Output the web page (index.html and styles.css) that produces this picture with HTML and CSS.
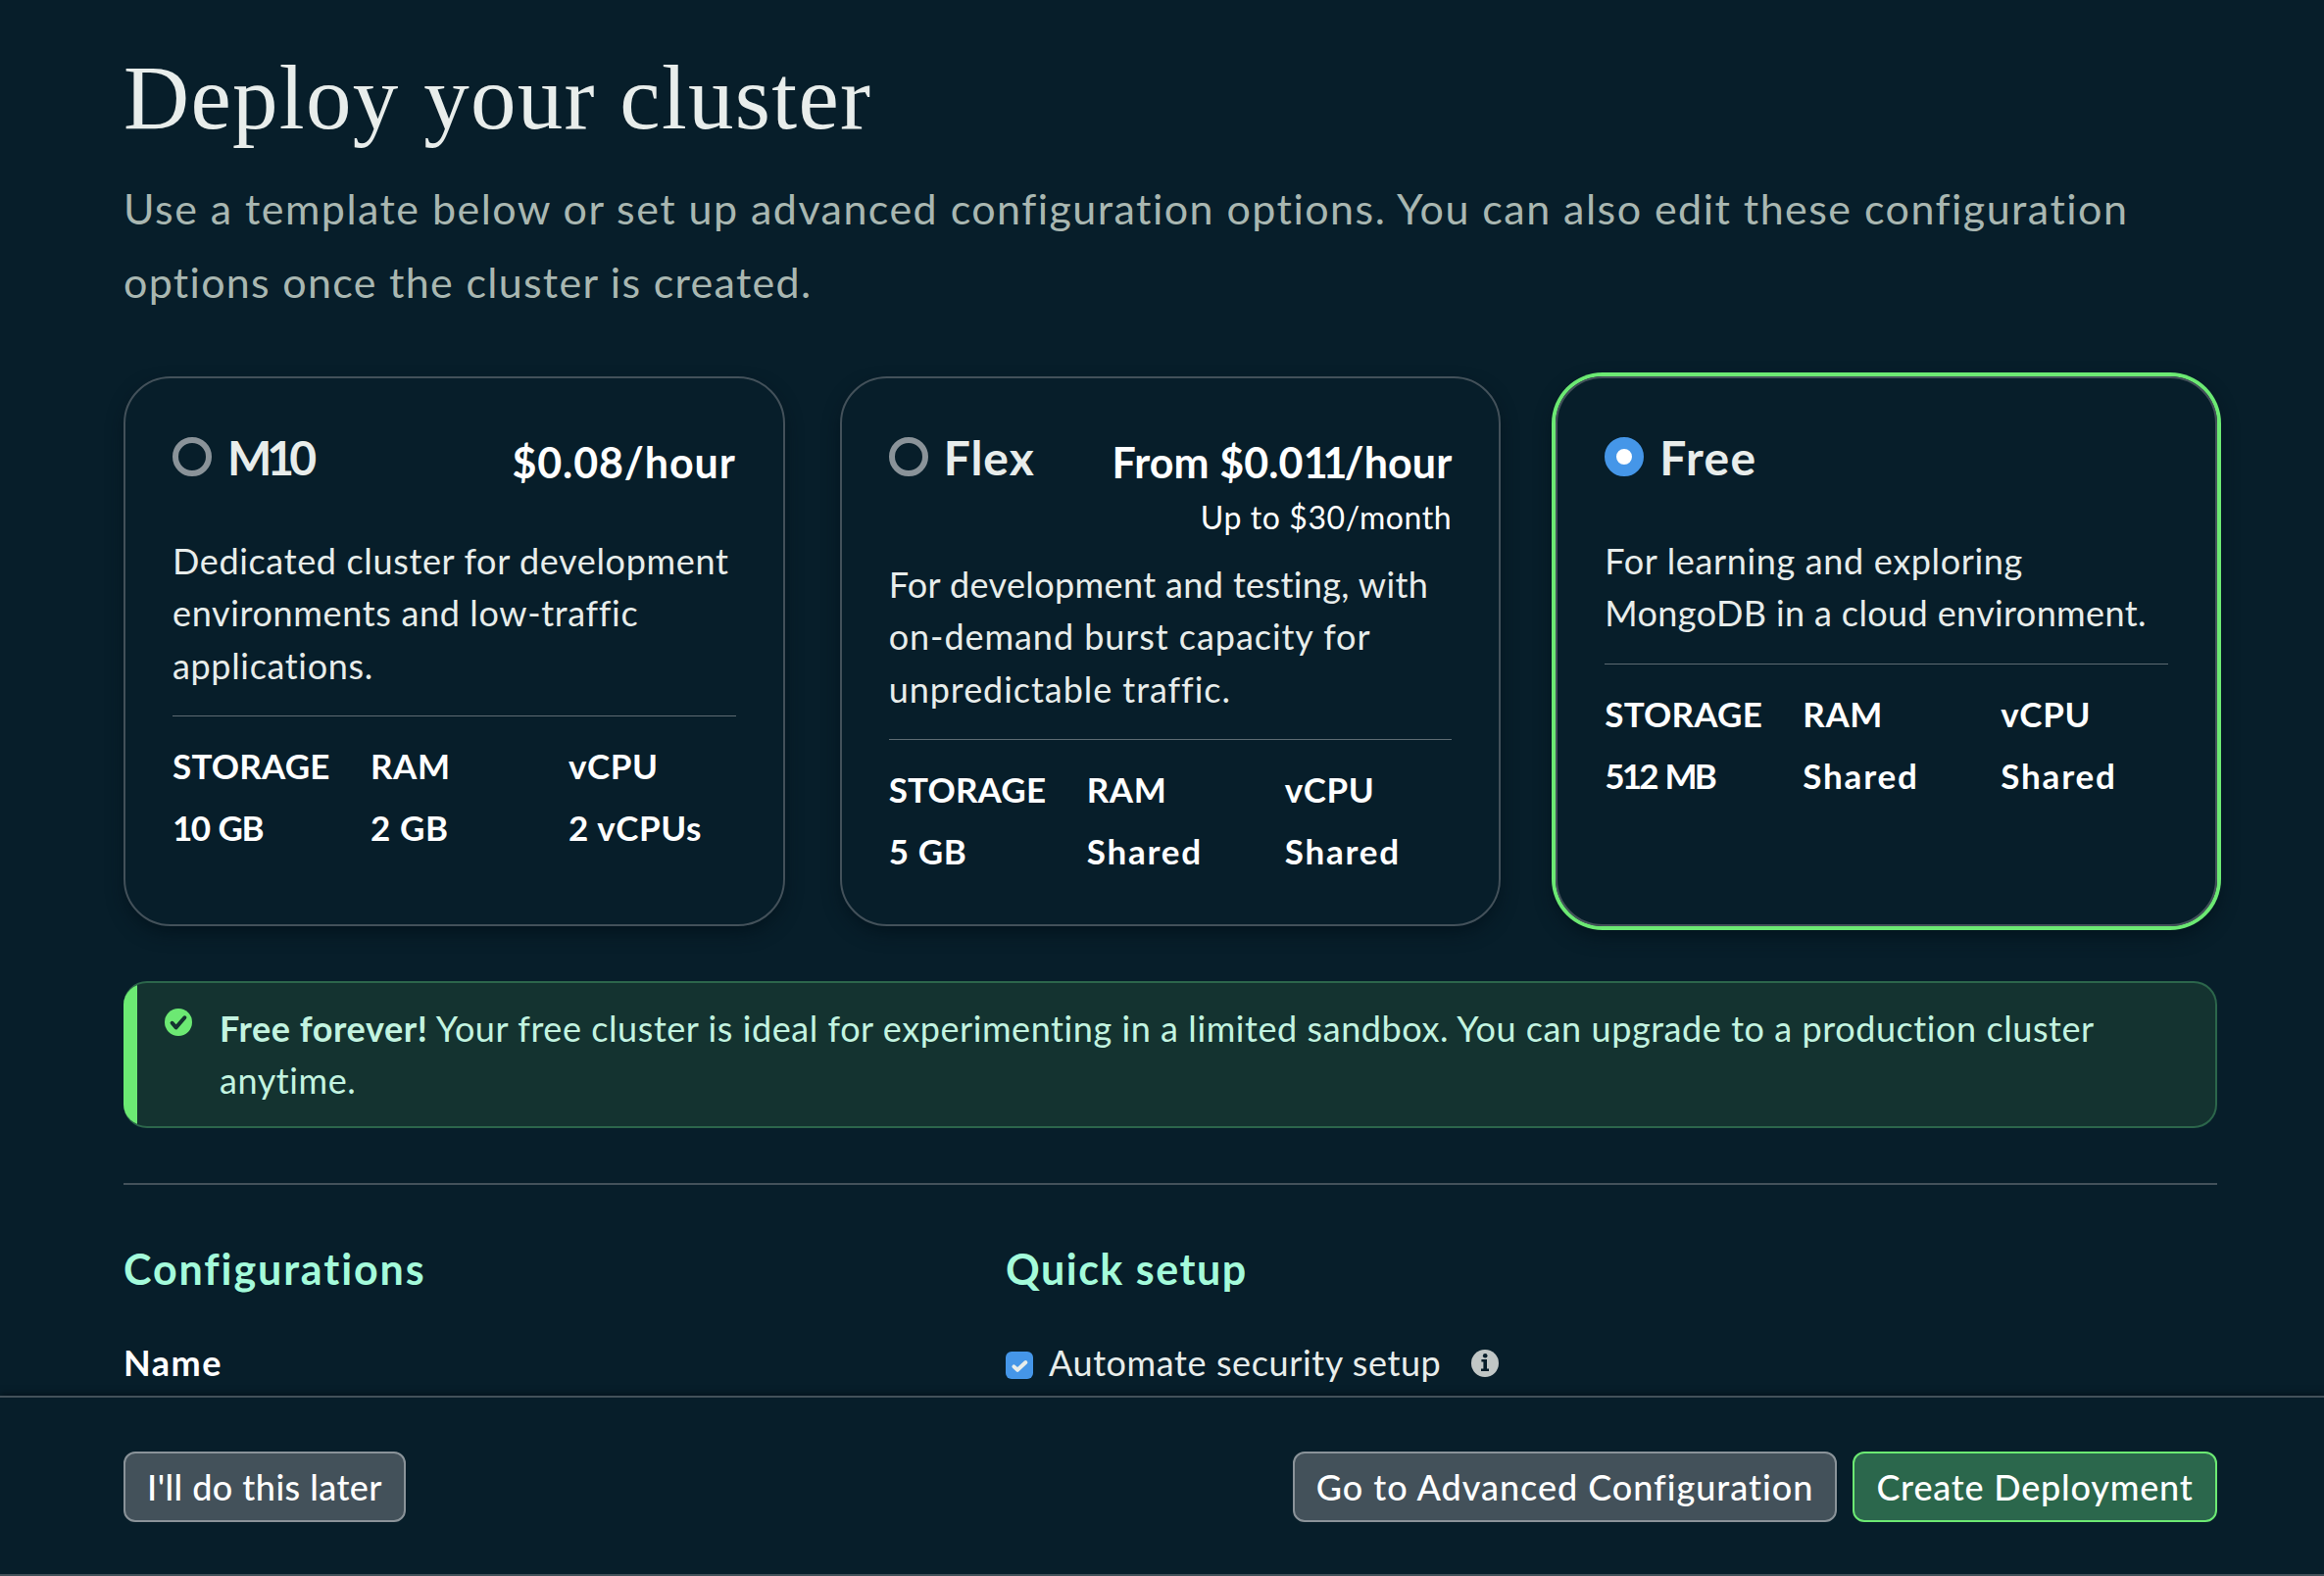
FILE: index.html
```html
<!DOCTYPE html>
<html lang="en">
<head>
<meta charset="utf-8">
<title>Deploy your cluster</title>
<link rel="stylesheet" href="styles.css">
</head>
<body>
<main class="page">
  <h1 class="title">Deploy your cluster</h1>
  <p class="subtitle">Use a template below or set up advanced configuration options. You can also edit these configuration<br><span class="second">options once the cluster is created.</span></p>

  <section class="cards">
    <article class="card">
      <header class="card-head">
        <span class="radio"></span>
        <h2 class="name name-m10">M10</h2>
        <div class="price"><strong class="rate">$0.08/hour</strong></div>
      </header>
      <p class="desc">Dedicated cluster for development<br>environments and low-traffic<br>applications.</p>
      <hr class="rule">
      <div class="specs">
        <span class="caps">STORAGE</span><span>RAM</span><span>vCPU</span>
        <span class="num">10 GB</span><span>2 GB</span><span>2 vCPUs</span>
      </div>
    </article>

    <article class="card">
      <header class="card-head">
        <span class="radio"></span>
        <h2 class="name">Flex</h2>
        <div class="price"><strong class="rate rate-flex">From $0.0<span class="ones">1</span><span class="one-last">1</span>/hour</strong><span class="cap">Up to $30/month</span></div>
      </header>
      <p class="desc"><span class="tight">For development and testing, with</span><br><span class="loose">on-demand burst capacity for<br>unpredictable traffic.</span></p>
      <hr class="rule">
      <div class="specs">
        <span class="caps">STORAGE</span><span>RAM</span><span>vCPU</span>
        <span>5 GB</span><span class="wide">Shared</span><span class="wide">Shared</span>
      </div>
    </article>

    <article class="card selected">
      <header class="card-head">
        <span class="radio checked"></span>
        <h2 class="name name-free">Free</h2>
      </header>
      <p class="desc">For learning and exploring<br><span class="tight">MongoDB in a cloud environment.</span></p>
      <hr class="rule">
      <div class="specs">
        <span class="caps">STORAGE</span><span>RAM</span><span>vCPU</span>
        <span class="num-mb">512 MB</span><span class="wide">Shared</span><span class="wide">Shared</span>
      </div>
    </article>
  </section>

  <section class="banner">
    <svg class="banner-icon" viewBox="0 0 28 28"><circle cx="14" cy="14" r="14" fill="#6ce973"/><path d="M7.6 14.8 11.6 19.4 20.4 9.3" fill="none" stroke="#143330" stroke-width="4" stroke-linecap="round" stroke-linejoin="round"/></svg>
    <p class="banner-text"><b>Free forever!</b> Your free cluster is ideal for experimenting in a limited sandbox. You can upgrade to a production cluster<br>anytime.</p>
  </section>

  <hr class="divider">

  <section class="setup">
    <div class="column">
      <h3 class="heading">Configurations</h3>
      <label class="field-label">Name</label>
    </div>
    <div class="column">
      <h3 class="heading heading-quick">Quick setup</h3>
      <div class="option">
        <svg class="checkbox" viewBox="0 0 28 28"><rect width="28" height="28" rx="6" fill="#4596e8"/><path d="M8.4 15.4 12.1 18.8 20.4 11" fill="none" stroke="#e8edeb" stroke-width="4" stroke-linecap="round" stroke-linejoin="round"/></svg>
        <span>Automate security setup</span>
        <svg class="info" viewBox="0 0 28 28"><circle cx="14" cy="14" r="14" fill="#c1c7c6"/><circle cx="14.2" cy="6.2" r="2.3" fill="#071e2a"/><path d="M10.4 10H16V19.6H18V22H10V19.6H12.4V12.4H10.4Z" fill="#071e2a"/></svg>
      </div>
    </div>
  </section>
</main>

<footer class="footer">
  <button class="button later">I'll do this later</button>
  <div class="actions">
    <button class="button advanced">Go to Advanced Configuration</button>
    <button class="button primary">Create Deployment</button>
  </div>
</footer>
</body>
</html>
```
FILE: styles.css
```css
* { box-sizing: border-box; margin: 0; padding: 0; }

body {
  height: 1608px;
  display: flex;
  flex-direction: column;
  overflow: hidden;
  background: #071e2a;
  color: #fff;
  font-family: Lato, "Liberation Sans", sans-serif;
  font-size: 36px;
  line-height: 53px;
  letter-spacing: 0.6px;
}

.page {
  height: 1424px;
  padding: 53px 109px 0 126px;
  overflow: hidden;
}

.title {
  font: 400 93px/94px "Liberation Serif", serif;
  letter-spacing: 1.3px;
  color: #e8edeb;
}

.subtitle {
  margin-top: 28px;
  font-size: 43px;
  line-height: 75px;
  letter-spacing: 1.46px;
  color: #a9b7b1;
  white-space: nowrap;
}

.second { letter-spacing: 1.3px; }

.cards {
  margin-top: 59px;
  display: grid;
  grid-template-columns: repeat(3, 1fr);
  gap: 56px;
}

.card {
  height: 561px;
  padding: 58px 48px 0;
  border: 2px solid #43515a;
  border-radius: 48px;
  box-shadow: 0 8px 20px -4px rgba(1, 15, 24, 0.8);
  white-space: nowrap;
}

.card.selected {
  box-shadow: 0 0 0 4px #6ce973, 0 8px 20px 0 rgba(1, 15, 24, 0.8);
}

.card-head {
  display: flex;
  align-items: flex-start;
  min-height: 102px;
  padding-bottom: 14px;
}

.radio {
  flex: none;
  width: 40px;
  height: 40px;
  margin-top: 2px;
  border: 6px solid #8a9399;
  border-radius: 50%;
}

.radio.checked { border: 12px solid #4596e8; background: #fff; }

.name {
  margin-left: 16px;
  font-size: 48px;
  line-height: 46px;
  letter-spacing: 1px;
  color: #e8edeb;
}

.name-m10 { letter-spacing: -5px; }
.name-free { letter-spacing: 1.4px; }

.price {
  margin-left: auto;
  display: flex;
  flex-direction: column;
  align-items: flex-end;
}

.rate { font-size: 43px; line-height: 56px; letter-spacing: 0.9px; }
.rate-flex { letter-spacing: 0.1px; }
.ones { letter-spacing: -5px; }
.one-last { letter-spacing: -3px; }
.cap { font-size: 32px; line-height: 56px; letter-spacing: 0.6px; }

.desc { line-height: 53.4px; letter-spacing: 0.65px; color: #e8edeb; }
.loose { letter-spacing: 0.95px; }
.tight { letter-spacing: 0.38px; }

.rule { margin-top: 24px; border: 0; height: 1px; background: #5d6b72; }

.specs {
  margin-top: 19px;
  display: grid;
  grid-template-columns: 202px 202px 1fr;
  font-size: 35px;
  font-weight: 700;
  line-height: 63px;
  letter-spacing: 0.6px;
}

.caps { letter-spacing: 0.2px; }
.wide { letter-spacing: 1.8px; }
.num { letter-spacing: -1.5px; word-spacing: 2px; }
.num-mb { letter-spacing: -2.8px; word-spacing: 3px; }

.banner {
  position: relative;
  height: 150px;
  margin-top: 56px;
  padding: 20px 40px 0 98px;
  border: 2px solid #2c664b;
  border-left: 0;
  border-radius: 24px;
  background: #143330;
  overflow: hidden;
  color: #c3f4e0;
  white-space: nowrap;
}

/* accent strip along the banner's left edge */
.banner::before {
  content: "";
  position: absolute;
  inset: -2px auto -2px 0;
  width: 14px;
  background: #6ce973;
}

.banner-icon { position: absolute; left: 42px; top: 26px; width: 28px; height: 28px; }
.banner-text { letter-spacing: 0.57px; }

.divider { margin-top: 56px; border: 0; height: 2px; background: #43515a; }

.setup {
  margin-top: 58px;
  display: grid;
  grid-template-columns: 900px 1fr;
}

.heading {
  font-size: 43px;
  line-height: 56px;
  letter-spacing: 1.9px;
  color: #a4fbdb;
}

.heading-quick { letter-spacing: 1.5px; }

.field-label {
  display: block;
  margin-top: 41px;
  font-weight: 700;
  letter-spacing: 1.5px;
}

.option {
  display: flex;
  align-items: center;
  margin-top: 41px;
  color: #e8edeb;
}

.checkbox { width: 28px; height: 28px; margin: 4px 16px 0 0; }
.info { width: 28px; height: 28px; margin: 0 0 0 31px; }

.footer {
  height: 184px;
  padding: 55px 109px 0 126px;
  display: flex;
  justify-content: space-between;
  align-items: flex-start;
  border-top: 2px solid #43515a;
  border-bottom: 2px solid #43515a;
  box-shadow: 0 -2px 6px rgba(1, 12, 20, 0.6);
}

.actions { display: flex; gap: 16px; }

.button {
  height: 72px;
  border: 2px solid #8a9399;
  border-radius: 12px;
  background: #43515a;
  color: #fff;
  font: 500 36px/53px Lato, "Liberation Sans", sans-serif;
  white-space: nowrap;
}

.later { width: 288px; letter-spacing: 0.45px; }
.advanced { width: 555px; letter-spacing: 0.97px; }
.primary { width: 372px; letter-spacing: 0.8px; background: #2b674c; border-color: #6ce973; }
```
